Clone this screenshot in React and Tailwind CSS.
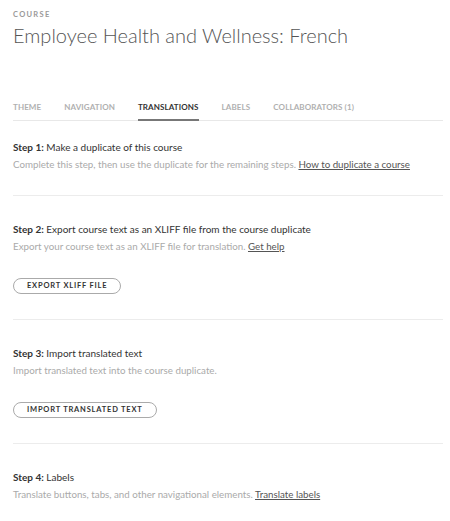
export default function App() {
  const font = { fontFamily: "Lato, 'Open Sans', sans-serif" };
  const tabs = ["THEME", "NAVIGATION", "TRANSLATIONS", "LABELS", "COLLABORATORS (1)"];
  return (
    <div className="w-[450px] h-[521px] bg-white pl-[13px] pr-[7px] overflow-hidden" style={font}>
      <div className="pt-[11px] text-[7.5px] font-bold tracking-[1.3px] text-[#9a9a9a] leading-[8px]">COURSE</div>
      <h1 className="mt-[4px] text-[20px] font-light text-[#555] leading-[24px]">Employee Health and Wellness: French</h1>
      <div className="mt-[55px] flex gap-[23px] border-b border-[#e8e8e8]">
        {tabs.map((t) => (
          <div
            key={t}
            className={
              "pb-[7px] text-[8px] font-bold tracking-[0.1px] leading-[10px] border-b-2 -mb-px " +
              (t === "TRANSLATIONS" ? "text-[#333] border-[#777]" : "text-[#b0b0b0] border-transparent")
            }
          >
            {t}
          </div>
        ))}
      </div>
      <div className="pt-[19px] pb-[24px] border-b border-[#ececec]">
        <div className="text-[10px] text-[#333] leading-[14px]"><span className="font-bold">Step 1:</span> Make a duplicate of this course</div>
        <div className="mt-[3px] text-[9.75px] text-[#aaa] leading-[14px]">
          Complete this step, then use the duplicate for the remaining steps.{" "}
          <span className="underline text-[#555]">How to duplicate a course</span>
        </div>
      </div>
      <div className="pt-[26px] pb-[25px] border-b border-[#ececec]">
        <div className="text-[10px] text-[#333] leading-[14px]"><span className="font-bold">Step 2:</span> Export course text as an XLIFF file from the course duplicate</div>
        <div className="mt-[3px] text-[9.75px] text-[#aaa] leading-[14px]">
          Export your course text as an XLIFF file for translation.{" "}
          <span className="underline text-[#555]">Get help</span>
        </div>
        <button className="mt-[25px] h-[16px] px-[13px] rounded-full border border-[#aaa] text-[7.5px] font-bold tracking-[0.8px] text-[#333] leading-[14px]">EXPORT XLIFF FILE</button>
      </div>
      <div className="pt-[26px] pb-[25px] border-b border-[#ececec]">
        <div className="text-[10px] text-[#333] leading-[14px]"><span className="font-bold">Step 3:</span> Import translated text</div>
        <div className="mt-[3px] text-[9.75px] text-[#aaa] leading-[14px]">Import translated text into the course duplicate.</div>
        <button className="mt-[25px] h-[16px] px-[13px] rounded-full border border-[#aaa] text-[7.5px] font-bold tracking-[0.8px] text-[#333] leading-[14px]">IMPORT TRANSLATED TEXT</button>
      </div>
      <div className="pt-[26px]">
        <div className="text-[10px] text-[#333] leading-[14px]"><span className="font-bold">Step 4:</span> Labels</div>
        <div className="mt-[3px] text-[9.75px] text-[#aaa] leading-[14px]">
          Translate buttons, tabs, and other navigational elements.{" "}
          <span className="underline text-[#555]">Translate labels</span>
        </div>
      </div>
    </div>
  );
}
